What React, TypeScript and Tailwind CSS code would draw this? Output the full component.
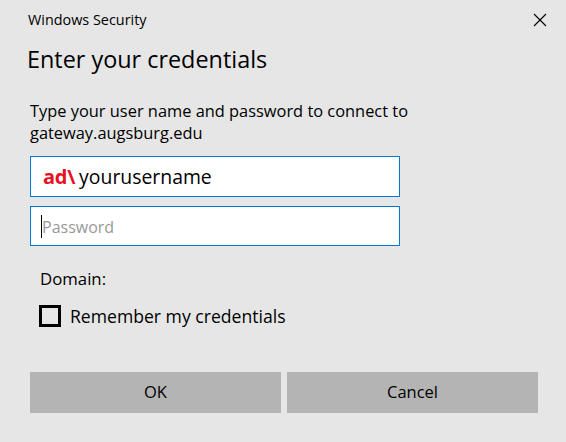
import React from "react";

export default function App() {
  return (
    <div
      className="w-[566px] h-[442px] bg-[#e6e6e6] text-black flex flex-col overflow-hidden"
      style={{ fontFamily: '"Open Sans", "Noto Sans", sans-serif' }}
    >
      {/* title bar */}
      <div className="flex items-center justify-between pl-[28px] pr-[19px] pt-[6px] h-[33px]">
        <span className="text-[14.4px] leading-[20px]">Windows Security</span>
        <svg width="14" height="14" viewBox="0 0 14 14" className="mt-[1px]">
          <path d="M1 1L13 13M13 1L1 13" stroke="#000" strokeWidth="1.1" fill="none" />
        </svg>
      </div>

      <h1 className="pl-[27px] mt-[10px] text-[23.4px] leading-[32px]">
        Enter your credentials
      </h1>

      <div className="pl-[30px] pr-[24px] mt-[25px]">
        <p className="text-[16.4px] leading-[22px]">
          Type your user name and password to connect to
          <br />
          gateway.augsburg.edu
        </p>

        <div className="mt-[12px] w-[370px] h-[41px] bg-white border border-[#0078d7] flex items-center pl-[12px]">
          <span className="text-[#e81123] font-bold text-[20px] tracking-[-0.3px]">ad\</span>
          <span className="text-[19.4px] ml-[4px]">yourusername</span>
        </div>

        <div className="mt-[9px] w-[370px] h-[40px] bg-white border border-[#0078d7] flex items-center pl-[10px] pt-[1px]">
          <span className="w-px h-[23px] bg-black" />
          <span className="text-[16px] text-[#999999]">Password</span>
        </div>

        <div className="pl-[10px] mt-[22px] text-[16.8px] leading-[22px]">Domain:</div>

        <div className="pl-[9px] mt-[14px] flex items-center gap-[9px]">
          <span className="w-[22px] h-[22px] border-[3px] border-black" />
          <span className="text-[17.6px] leading-[24px]">Remember my credentials</span>
        </div>

        <div className="mt-[44px] flex gap-[6px]">
          <button className="w-[251px] h-[41px] bg-[#b4b4b4] text-[16.5px]">OK</button>
          <button className="w-[251px] h-[41px] bg-[#b4b4b4] text-[16.5px]">Cancel</button>
        </div>
      </div>
    </div>
  );
}
